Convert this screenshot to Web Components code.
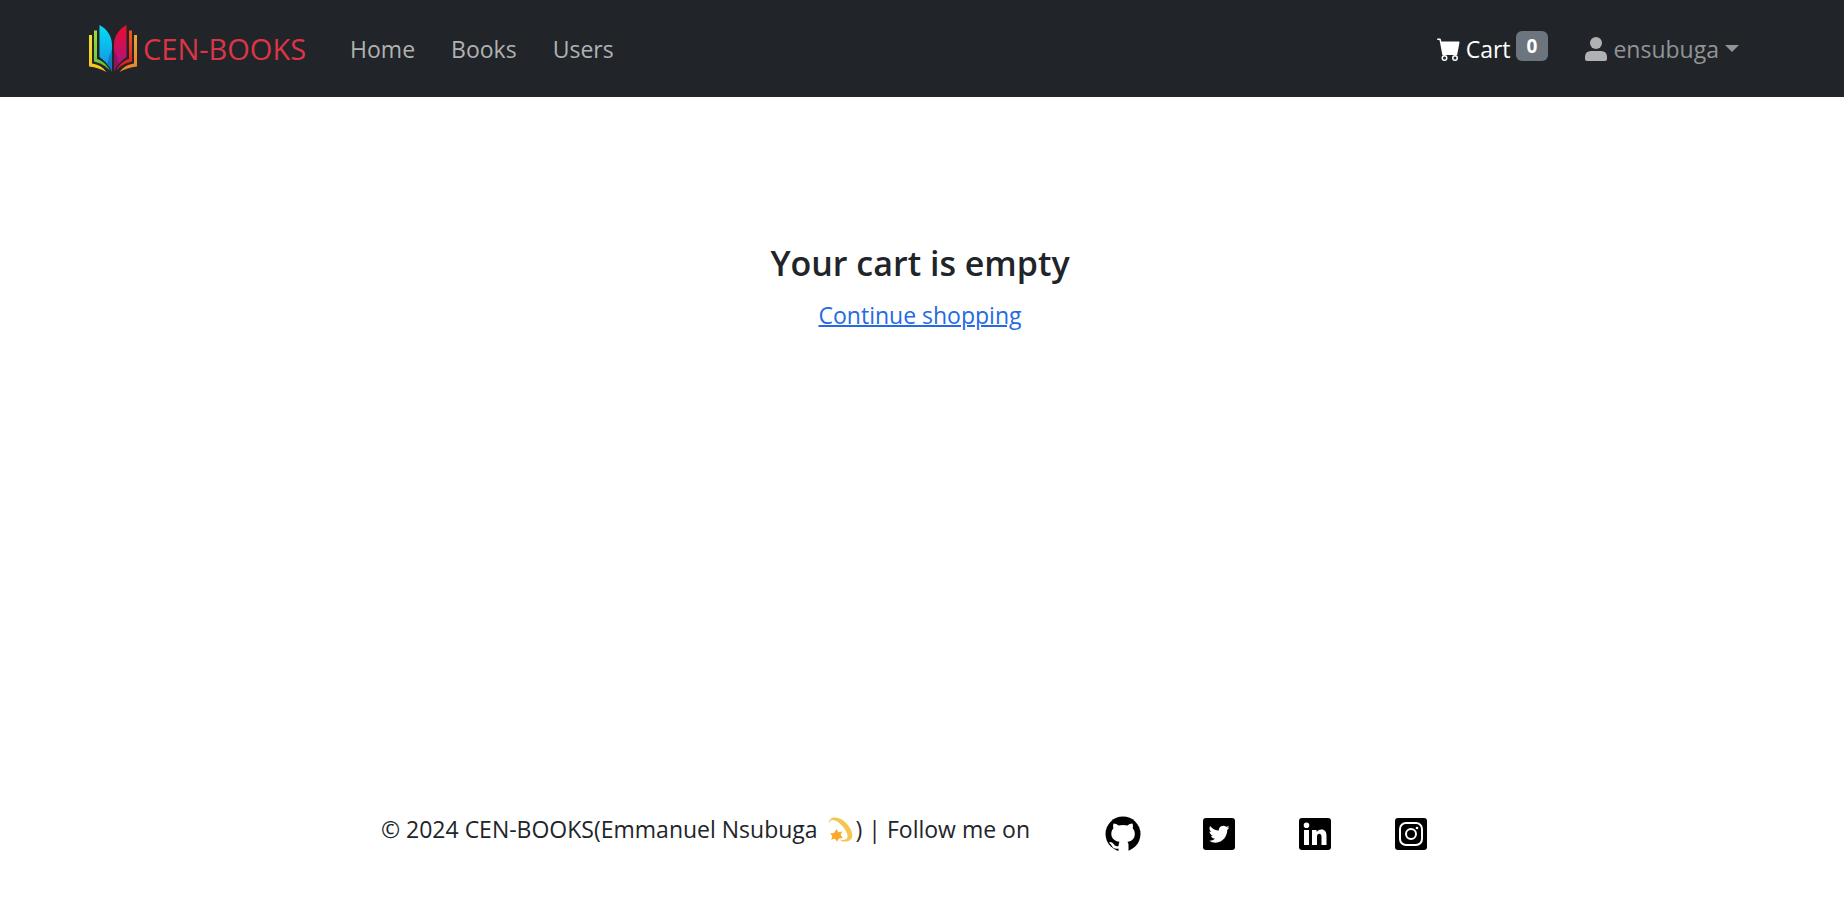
<!DOCTYPE html>
<html lang="en">
<head>
<meta charset="utf-8">
<meta name="viewport" content="width=device-width, initial-scale=1">
<title>CEN-BOOKS | Cart</title>
<style>
  body { margin: 0; background: #fff; color: #212529; font: 23px/36px "Segoe UI", "Open Sans", "Noto Sans", sans-serif; }
</style>
</head>
<body>
<book-app>
  <site-header slot="header">
    <nav-link href="#home">Home</nav-link>
    <nav-link href="#books">Books</nav-link>
    <nav-link href="#users">Users</nav-link>
    <cart-link slot="end" count="0">Cart</cart-link>
    <user-menu slot="end">ensubuga</user-menu>
  </site-header>
  <empty-cart></empty-cart>
  <site-footer slot="footer"></site-footer>
</book-app>

<script>
function define(name, html, setup) {
  customElements.define(name, class extends HTMLElement {
    constructor() {
      super();
      this.attachShadow({ mode: 'open' }).innerHTML = html;
    }
    connectedCallback() {
      if (setup) setup(this, this.shadowRoot);
    }
  });
}

define('book-app', `
  <style>
    :host { display: flex; flex-direction: column; min-height: 100vh; }
    main { flex: 1; padding: 144px 28px 48px 24px; }
  </style>
  <slot name="header"></slot>
  <main><slot></slot></main>
  <slot name="footer"></slot>`);

define('book-logo', `
  <style>
    :host { display: block; width: 48px; height: 48px; }
    svg { display: block; width: 100%; height: 100%; }
  </style>
  <svg viewBox="0 0 48 48" aria-hidden="true">
    <defs>
      <linearGradient id="y" x2="0" y2="1"><stop stop-color="#f3dc28"/><stop offset="1" stop-color="#f7c41c"/></linearGradient>
      <linearGradient id="g" x2="0" y2="1"><stop stop-color="#a4d936"/><stop offset="1" stop-color="#5fc23a"/></linearGradient>
      <linearGradient id="b" x2="0" y2="1"><stop stop-color="#04dff5"/><stop offset="1" stop-color="#168be0"/></linearGradient>
      <linearGradient id="p" x2="0" y2="1"><stop stop-color="#ee0c2c"/><stop offset="1" stop-color="#a3148f"/></linearGradient>
      <linearGradient id="r" x2="0" y2="1"><stop stop-color="#f2581d"/><stop offset="1" stop-color="#e3141c"/></linearGradient>
      <linearGradient id="o" x2="0" y2="1"><stop stop-color="#e9a82e"/><stop offset="1" stop-color="#ee7f28"/></linearGradient>
    </defs>
    <path fill="url(#y)" d="M0 10h3v28.500c6 .8 10.500 3.200 14.500 8.500C12 44 7 42.500 0 41.500z"/>
    <path fill="url(#g)" d="M5 5.500h3v28.500c6 2 9.500 5.500 13 11.500-4.500-4.500-9-7.500-16-9z"/>
    <path fill="url(#b)" d="M10.500 0C18 4 23 11 23 20v27c-2-6-6.500-10-12.500-15z"/>
    <path fill="#0c65a4" opacity=".6" d="M20 31q2-3 3-7v23q-1.500-4-5-8 2-4 2-8z"/>
    <path fill="url(#p)" d="M37.500 0C30 4 25 11 25 20v27c2-6 6.500-10 12.500-15z"/>
    <path fill="#741064" opacity=".6" d="M28 31q-2-3-3-7v23q1.500-4 5-8-2-4-2-8z"/>
    <path fill="url(#r)" d="M43 5.500h-3v28.500c-6 2-9.500 5.500-13 11.500 4.500-4.500 9-7.500 16-9z"/>
    <path fill="url(#o)" d="M48 10h-3v28.500c-6 .8-10.500 3.200-14.500 8.500C36 44 41 42.500 48 41.500z"/>
  </svg>`);

define('site-header', `
  <style>
    :host { display: block; background: #212529; }
    header { display: flex; align-items: center; height: 97px; max-width: 1710px; margin: 0 auto; padding: 0 26px 0 22px; box-sizing: border-box; }
    .brand { display: flex; align-items: center; gap: 6px; margin-right: 32px; color: #dc3545; font-size: 29px; text-decoration: none; }
    nav, .end { display: flex; align-items: center; }
    nav { gap: 12px; }
    .end { margin-left: auto; gap: 13px; }
  </style>
  <header>
    <a class="brand" href="#home"><book-logo></book-logo><span>CEN-BOOKS</span></a>
    <nav aria-label="Main"><slot></slot></nav>
    <div class="end"><slot name="end"></slot></div>
  </header>`);

define('nav-link', `
  <style>
    :host { display: block; }
    a { display: block; padding: 12px; color: #b0b1b2; text-decoration: none; }
  </style>
  <a><slot></slot></a>`,
  (el, root) => root.querySelector('a').setAttribute('href', el.getAttribute('href')));

define('cart-link', `
  <style>
    :host { display: block; }
    a { display: flex; align-items: center; padding: 12px; color: #fff; text-decoration: none; }
    svg { width: 24px; height: 24px; margin-right: 5px; }
    .badge { margin-left: 5px; margin-bottom: 6px; padding: 0 11px; border-radius: 6px; background: #6c757d; font-size: 19px; line-height: 30px; font-weight: 700; }
  </style>
  <a href="#cart">
    <svg viewBox="0 0 16 16" fill="currentColor" aria-hidden="true"><path d="M0 1.500A.5.5 0 0 1 .5 1H2a.5.5 0 0 1 .485.379L2.890 3H14.500a.5.5 0 0 1 .491.592l-1.500 8A.5.5 0 0 1 13 12H4a.5.5 0 0 1-.491-.408L2.010 3.607 1.610 2H.5a.5.5 0 0 1-.5-.5M5 12a2 2 0 1 0 0 4 2 2 0 0 0 0-4m7 0a2 2 0 1 0 0 4 2 2 0 0 0 0-4m-7 1a1 1 0 1 1 0 2 1 1 0 0 1 0-2m7 0a1 1 0 1 1 0 2 1 1 0 0 1 0-2"/></svg>
    <slot></slot><span class="badge"></span>
  </a>`,
  (el, root) => root.querySelector('.badge').textContent = el.getAttribute('count'));

define('user-menu', `
  <style>
    :host { display: block; }
    button { display: flex; align-items: center; padding: 12px; border: 0; background: none; color: #929496; font: inherit; cursor: pointer; }
    svg { width: 22px; height: 24px; margin-right: 6px; color: #b0b1b2; }
    i { margin-left: 6px; border: 7px solid transparent; border-top-color: currentColor; border-bottom: 0; }
  </style>
  <button type="button" aria-haspopup="true" aria-expanded="false">
    <svg viewBox="0 0 22 24" fill="currentColor" aria-hidden="true"><circle cx="11" cy="6" r="6"/><path d="M6 14h10q6 0 6 6v2q0 2-2 2H2q-2 0-2-2v-2q0-6 6-6z"/></svg>
    <slot></slot><i></i>
  </button>`);

define('empty-cart', `
  <style>
    :host { display: block; text-align: center; }
    h1 { margin: 0 0 12px; font-size: 34px; line-height: 44px; font-weight: 600; }
    a { color: #256ae3; text-decoration-thickness: 2px; }
  </style>
  <section><h1>Your cart is empty</h1><a href="#books">Continue shopping</a></section>`);

define('social-link', `
  <style>
    :host { display: block; }
    a { display: block; padding: 0 24px; color: #000; }
    svg { display: block; width: 48px; height: 48px; }
  </style>
  <a><svg viewBox="0 0 48 48" fill="currentColor" aria-hidden="true"></svg></a>`,
  (el, root) => {
    const icons = {
      GitHub: '<circle cx="24" cy="24" r="17.500"/><path fill="#fff" d="M14.500 13.500c2 0 3.700.9 5 2a19 19 0 0 1 9 0c1.300-1.100 3-2 5-2 .6 1.600.6 3.300.2 4.700 1.400 1.500 2.100 3.400 2.100 5.500 0 4.800-2.700 7.300-7.300 8 .7.8 1 1.900 1 3.300V42H19.500v-3.400c-3.900.7-5.600-.6-6.800-2.900-.6-1.100-1.200-1.900-2.100-2.500-.5-.4-.3-1.200.4-1.200 1.900 0 3 1.200 4 2.600 1.100 1.600 2.600 1.900 4.500 1.300.1-1.800.4-2.900 1-4.200-4.600-.7-8.200-3.200-8.200-8 0-2.100.8-4 2.100-5.500-.4-1.400-.4-3.100.1-4.700z"/>',
      Twitter: '<rect x="8" y="8" width="32" height="32" rx="3"/><path fill="#fff" transform="translate(13 13) scale(1.040)" d="M20.500 4.010c-.8.36-1.300.5-2 .6.9-.54 1.100-1 1.400-1.900-.8.5-1.600.8-2.400 1A4.270 4.270 0 0 0 10.400 7.240C6.850 7.060 4 5.360 2 2.780c-1.130 1.940-.6 4.490 1.320 5.700-.7-.02-1.360-.21-1.940-.53v.05c0 2.020 1.420 3.750 3.420 4.180-.63.17-1.280.2-1.920.07.54 1.690 2.110 2.950 3.980 2.980A8.600 8.600 0 0 1 1.120 17 12.100 12.100 0 0 0 7.200 18.920c7.400 0 11.400-6.680 11.300-12.100.9-.7 1.500-1.700 2-2.810z"/>',
      LinkedIn: '<rect x="8" y="8" width="32" height="32" rx="3"/><path fill="#fff" d="M13 20h5v15h-5zM15.500 12.500a2.800 2.800 0 1 1 0 5.600 2.800 2.800 0 0 1 0-5.600M21 20h4.600v2c1-1.500 2.600-2.400 4.600-2.400 3.800 0 5.300 2.400 5.300 6.300V35h-5v-8c0-2-.6-3.300-2.300-3.300S26 25 26 27v8h-5z"/>',
      Instagram: '<rect x="8" y="8" width="32" height="32" rx="3"/><g fill="none" stroke="#fff" stroke-width="2"><rect x="13" y="13" width="22" height="22" rx="6"/><circle cx="24" cy="24" r="5"/></g><circle cx="30" cy="18" r="1.300" fill="#fff"/>'
    };
    const name = el.getAttribute('name'), a = root.querySelector('a');
    a.href = '#' + name.toLowerCase();
    a.setAttribute('aria-label', name);
    root.querySelector('svg').innerHTML = icons[name];
  });

define('dizzy-star', `
  <style>
    :host { display: inline-block; width: 26px; height: 26px; margin: 0 2px 0 4px; vertical-align: -5px; }
    svg { display: block; width: 100%; height: 100%; }
  </style>
  <svg viewBox="0 0 26 26" role="img" aria-label="dizzy"><path fill="#f4c64f" d="M1 7C0-1 11-2 19 7c8 9 7 18-3 17.500-2 0-3-.8-4-1.800 8 1.300 10-3 4.500-11C10 3 2 0 1 7z"/><path fill="#fba92c" d="m8.500 12 1.800 3.200 3.900-.6-1.600 3.500 2.200 3-3.800.4-1.900 3-2.200-2.700-3.600.9 1-3.700-2.300-2.500 4-.6z"/></svg>`);

define('site-footer', `
  <style>
    :host { display: block; padding: 0 28px 54px 24px; }
    footer { display: flex; flex-wrap: wrap; justify-content: center; align-items: flex-start; }
    p { margin: 0 45px 0 0; padding-top: 1px; }
    nav { display: flex; }
  </style>
  <footer>
    <p>© 2024 CEN-BOOKS(Emmanuel Nsubuga <dizzy-star></dizzy-star>) | Follow me on</p>
    <nav aria-label="Social media">
      <social-link name="GitHub"></social-link>
      <social-link name="Twitter"></social-link>
      <social-link name="LinkedIn"></social-link>
      <social-link name="Instagram"></social-link>
    </nav>
  </footer>`);
</script>
</body>
</html>
